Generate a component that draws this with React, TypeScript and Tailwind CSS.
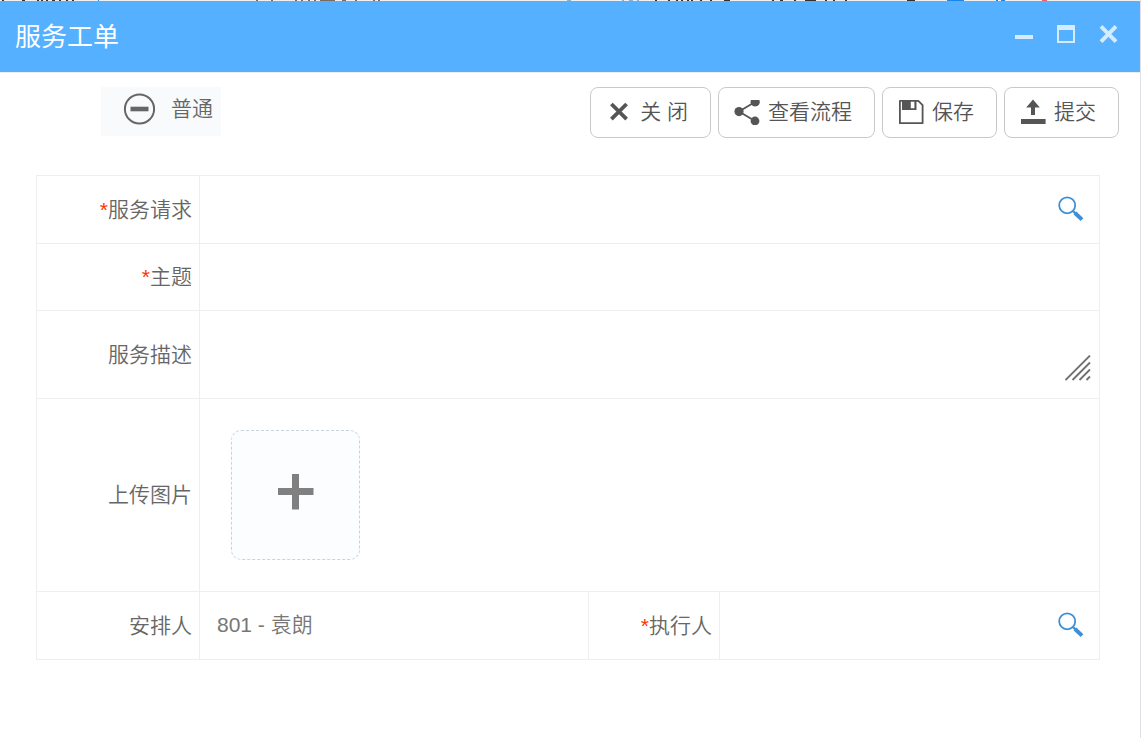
import React from 'react';

const SearchIcon = () => (
  <svg viewBox="0 0 26 26" className="w-[26px] h-[26px]" fill="none" stroke="#3d90d5">
    <circle cx="9.2" cy="9.3" r="8" strokeWidth="1.8" />
    <path d="M15 15L17.5 17.5" strokeWidth="2.4" />
    <path d="M17 17L24 23.6" strokeWidth="4" />
  </svg>
);

const CloseIcon = () => (
  <svg viewBox="0 0 26 26" className="w-[26px] h-[26px]" stroke="currentColor" strokeWidth="3.8">
    <path d="M5.4 5L20.6 20.2M20.6 5L5.4 20.2" />
  </svg>
);

const ShareIcon = () => (
  <svg viewBox="0 0 26 26" className="w-[26px] h-[26px]" fill="currentColor">
    <path d="M21 3L5 12.6L21 22" fill="none" stroke="currentColor" strokeWidth="1.8" />
    <circle cx="5" cy="12.6" r="4.6" />
    <circle cx="21" cy="22" r="4.4" />
    <path d="M17 1h8.3a4.6 4.6 0 1 1-8.3 0z" />
  </svg>
);

const SaveIcon = () => (
  <svg viewBox="0 0 26 26" className="w-[26px] h-[26px]" fill="currentColor">
    <path d="M1.9 1.9h18.4l4.3 4.3v18H1.9z" fill="none" stroke="currentColor" strokeWidth="1.8" strokeLinejoin="round" />
    <path d="M4 1h14.5v10H4zM12.8 2v7.2h3.6V2z" fillRule="evenodd" />
  </svg>
);

const SubmitIcon = () => (
  <svg viewBox="0 0 26 26" className="w-[26px] h-[26px]" fill="currentColor">
    <path d="M13 0.5L19.8 8.6H15V16H11V8.6H6.2z" />
    <rect x="1" y="20" width="24.6" height="5" />
  </svg>
);

const actions = [
  { label: '关 闭', icon: CloseIcon },
  { label: '查看流程', icon: ShareIcon },
  { label: '保存', icon: SaveIcon },
  { label: '提交', icon: SubmitIcon },
];

// Bits of the page behind the dialog that show above its title bar
const backdrop = [
  { color: '#33302f', bits: [[2, 2], [22, 3], [37, 2], [41, 2], [46, 2], [52, 3], [59, 2], [66, 2], [72, 2]] },
  { color: '#7a6a60', bits: [[256, 2], [271, 2], [295, 2], [301, 2], [308, 2], [314, 2], [320, 15], [342, 4], [355, 2], [373, 2], [378, 2]] },
  { color: '#33302f', bits: [[655, 2], [668, 2], [676, 2], [681, 2], [687, 2], [691, 2], [700, 2], [710, 2], [724, 6]] },
  { color: '#33302f', bits: [[772, 2], [780, 3], [794, 2], [805, 11], [825, 2], [833, 2], [845, 2], [907, 8]] },
  { color: '#1a85ea', bits: [[98, 1], [947, 17], [996, 2], [1001, 4]] },
  { color: '#7fb4d6', bits: [[567, 4], [622, 2], [629, 4], [637, 2]] },
  { color: '#f25f62', bits: [[1042, 5]] },
];

const Label = ({ htmlFor, required, children }: { htmlFor: string; required?: boolean; children: React.ReactNode }) => (
  <label htmlFor={htmlFor} className="flex items-center justify-end pr-[7px] text-[#666666] border-r border-b border-[#eeeeee]">
    {required && <span className="text-[#ff3300]">*</span>}
    {children}
  </label>
);

const App = () => {
  return (
    <div
      className="min-h-screen bg-white border-r border-[#e0e0e6] text-[21px] leading-8 font-[350] text-[#555555]"
      style={{ fontFamily: "'Liberation Sans', 'Noto Sans CJK SC', sans-serif" }}
    >
      <div className="h-px bg-[#f0f0f0] overflow-hidden">
        <svg width="1140" height="1" className="block" aria-hidden="true">
          {backdrop.map((group, index) => (
            <g key={index} fill={group.color}>
              {group.bits.map(([x, w]) => (
                <rect key={x} x={x} y="0" width={w} height="1" />
              ))}
            </g>
          ))}
        </svg>
      </div>

      {/* Title bar */}
      <header className="h-[72px] flex items-center justify-between bg-[#55b0ff] border-b border-[#eeeeee] pl-[15px] pr-[22px] text-white">
        <h1 className="text-[26px] font-normal">服务工单</h1>
        <div className="flex gap-[22px] pb-[6px] text-[#d5ebff]">
          <button type="button" aria-label="最小化">
            <svg viewBox="0 0 20 20" className="w-5 h-5" fill="currentColor">
              <rect x="1" y="11" width="18" height="4" />
            </svg>
          </button>
          <button type="button" aria-label="最大化">
            <svg viewBox="0 0 20 20" className="w-5 h-5" fill="currentColor">
              <path d="M1 1h18v18H1zM3 6v11h14V6z" fillRule="evenodd" />
            </svg>
          </button>
          <button type="button" aria-label="关闭窗口">
            <svg viewBox="0 0 20 20" className="w-5 h-5" stroke="currentColor" strokeWidth="4">
              <path d="M3 2.4L18 17.6M18 2.4L3 17.6" />
            </svg>
          </button>
        </div>
      </header>

      {/* Toolbar */}
      <div className="flex items-start justify-between pt-[14px] pl-[101px] pr-[21px]">
        <button type="button" className="h-[49px] flex items-center gap-4 pl-[22px] pr-2 pb-[6px] bg-[#f8fafc] text-[#666666]">
          <svg viewBox="0 0 32 32" className="w-8 h-8" fill="none" stroke="currentColor">
            <circle cx="16.5" cy="16" r="14.6" strokeWidth="2" />
            <path d="M7.5 16h18" strokeWidth="4.6" />
          </svg>
          普通
        </button>
        <div className="flex gap-[7px]">
          {actions.map((action) => (
            <button
              key={action.label}
              type="button"
              className="h-[51px] flex items-center gap-2 pl-[15px] pr-[22px] pb-[2px] rounded-lg border border-[#c9c9c9] bg-white"
            >
              <action.icon />
              {action.label}
            </button>
          ))}
        </div>
      </div>

      {/* Form */}
      <form className="mt-[37px] ml-9 mr-10 border-t border-l border-[#eeeeee]">
        <div className="h-[68px] grid grid-cols-[163px_1fr]">
          <Label htmlFor="request" required>服务请求</Label>
          <div className="flex items-center pl-[17px] pr-[15px] pb-[2px] border-r border-b border-[#eeeeee]">
            <input id="request" className="flex-1 min-w-0 outline-none" />
            <button type="button" aria-label="查找服务请求"><SearchIcon /></button>
          </div>
        </div>

        <div className="h-[67px] grid grid-cols-[163px_1fr]">
          <Label htmlFor="subject" required>主题</Label>
          <div className="flex items-center px-[17px] border-r border-b border-[#eeeeee]">
            <input id="subject" className="flex-1 min-w-0 outline-none" />
          </div>
        </div>

        <div className="h-[88px] grid grid-cols-[163px_1fr]">
          <Label htmlFor="description">服务描述</Label>
          <div className="flex items-end pl-[17px] pr-2 pb-[17px] border-r border-b border-[#eeeeee]">
            <textarea id="description" rows={1} className="flex-1 min-w-0 resize-none outline-none" />
            <svg viewBox="0 0 26 26" className="w-[26px] h-[26px]" stroke="#707070" strokeWidth="1.8">
              <path d="M0.5 25L25 0.5M7.5 25L25 7.5M14.5 25L25 14.5M21.5 25L25 21.5" />
            </svg>
          </div>
        </div>

        <div className="grid grid-cols-[163px_1fr]">
          <Label htmlFor="upload">上传图片</Label>
          <div className="p-[31px] border-r border-b border-[#eeeeee]">
            <button
              id="upload"
              type="button"
              aria-label="添加图片"
              className="w-[129px] h-[130px] flex items-center justify-center pb-[6px] rounded-[10px] border border-dashed border-[#c8d3e0] bg-[#fbfdff]"
            >
              <svg viewBox="0 0 36 36" className="w-9 h-9" stroke="#808080" strokeWidth="7">
                <path d="M0 17.5h35.5M17.5 0v35.5" />
              </svg>
            </button>
          </div>
        </div>

        <div className="h-[68px] grid grid-cols-[163px_389fr_131px_380fr]">
          <Label htmlFor="arranger">安排人</Label>
          <div className="flex items-center px-[17px] pb-[2px] border-r border-b border-[#eeeeee]">
            <input id="arranger" defaultValue="801 - 袁朗" className="flex-1 min-w-0 text-[#777777] outline-none" />
          </div>
          <Label htmlFor="executor" required>执行人</Label>
          <div className="flex items-center pl-[17px] pr-[15px] pb-[2px] border-r border-b border-[#eeeeee]">
            <input id="executor" className="flex-1 min-w-0 outline-none" />
            <button type="button" aria-label="查找执行人"><SearchIcon /></button>
          </div>
        </div>
      </form>
    </div>
  );
};

export default App;
